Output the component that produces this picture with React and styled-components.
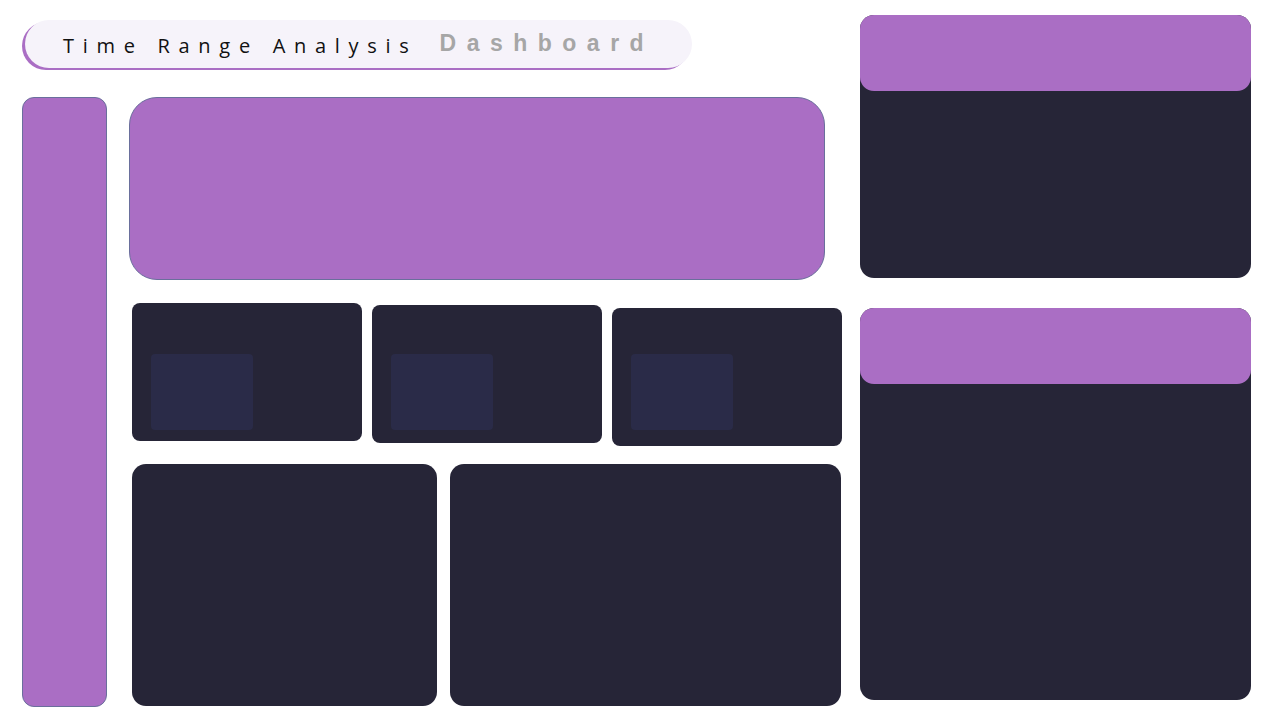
import React from "react";
import styled, { createGlobalStyle } from "styled-components";

const Global = createGlobalStyle`
  html, body { margin: 0; padding: 0; background: #ffffff; }
  body { width: 1280px; height: 720px; overflow: hidden; font-family: "Open Sans", "Liberation Sans", sans-serif; }
`;

const purple = "#aa6ec4";
const dark = "#262537";
const edge = "#6a6f9c";

const Page = styled.div`
  display: flex;
  width: 1280px;
  height: 720px;
  box-sizing: border-box;
  padding: 0 30px 0 22px;
`;

const LeftArea = styled.div`
  display: flex;
  flex-direction: column;
  width: 838px;
  flex-shrink: 0;
`;

const TitlePill = styled.div`
  margin-top: 20px;
  margin-left: 3px;
  width: 667px;
  height: 48px;
  box-sizing: border-box;
  background: #f6f3fa;
  border-radius: 24px;
  box-shadow: -3px 2px 0 0 ${purple};
  display: flex;
  align-items: center;
  padding-left: 38px;
  padding-top: 2px;
`;

const TitleText = styled.span`
  font-family: "Open Sans", "Liberation Sans", sans-serif;
  font-size: 20px;
  letter-spacing: 8.7px;
  color: #111111;
`;

const TitleAccent = styled.span`
  font-family: "Liberation Sans", Arial, sans-serif;
  font-weight: bold;
  font-size: 23px;
  letter-spacing: 10.5px;
  color: #a6a6a6;
  margin-left: 22px;
  margin-top: -4px;
`;

const Body = styled.div`
  margin-top: 29px;
  display: flex;
  gap: 22px;
`;

const Sidebar = styled.div`
  flex-shrink: 0;
  width: 85px;
  height: 610px;
  box-sizing: border-box;
  background: ${purple};
  border: 1px solid ${edge};
  border-radius: 12px;
`;

const Main = styled.div`
  display: flex;
  flex-direction: column;
  flex-shrink: 0;
`;

const Banner = styled.div`
  width: 696px;
  height: 183px;
  box-sizing: border-box;
  background: ${purple};
  border: 1px solid ${edge};
  border-radius: 28px;
`;

const CardRow = styled.div`
  display: flex;
  gap: 10px;
  margin-left: 3px;
  margin-top: 23px;
  align-items: flex-start;
  height: 143px;
`;

const StatCard = styled.div`
  flex-shrink: 0;
  width: 230px;
  height: 138px;
  margin-top: ${(p) => p.$offset}px;
  background: ${dark};
  border-radius: 8px;
  display: flex;
  padding: ${(p) => 51 - p.$offset}px 0 0 19px;
  box-sizing: border-box;
`;

const StatInner = styled.div`
  width: 102px;
  height: 76px;
  background: #2a2b48;
  border-radius: 4px;
`;

const BottomRow = styled.div`
  display: flex;
  gap: 13px;
  margin-left: 3px;
  margin-top: 18px;
`;

const BigCard = styled.div`
  flex-shrink: 0;
  width: ${(p) => p.$w}px;
  height: 242px;
  background: ${dark};
  border-radius: 14px;
`;

const RightArea = styled.div`
  display: flex;
  flex-direction: column;
  gap: 30px;
  padding-top: 15px;
  flex-shrink: 0;
`;

const Panel = styled.div`
  width: 391px;
  height: ${(p) => p.$h}px;
  background: ${dark};
  border-radius: 14px;
  display: flex;
  flex-direction: column;
`;

const PanelHeader = styled.div`
  height: 76px;
  background: ${purple};
  border-radius: 14px;
`;

export default function App() {
  return (
    <>
      <Global />
      <Page>
        <LeftArea>
          <TitlePill>
            <TitleText>Time Range Analysis</TitleText>
            <TitleAccent>Dashboard</TitleAccent>
          </TitlePill>
          <Body>
            <Sidebar />
            <Main>
              <Banner />
              <CardRow>
                <StatCard $offset={0}><StatInner /></StatCard>
                <StatCard $offset={2}><StatInner /></StatCard>
                <StatCard $offset={5}><StatInner /></StatCard>
              </CardRow>
              <BottomRow>
                <BigCard $w={305} />
                <BigCard $w={391} />
              </BottomRow>
            </Main>
          </Body>
        </LeftArea>
        <RightArea>
          <Panel $h={263}><PanelHeader /></Panel>
          <Panel $h={392}><PanelHeader /></Panel>
        </RightArea>
      </Page>
    </>
  );
}
